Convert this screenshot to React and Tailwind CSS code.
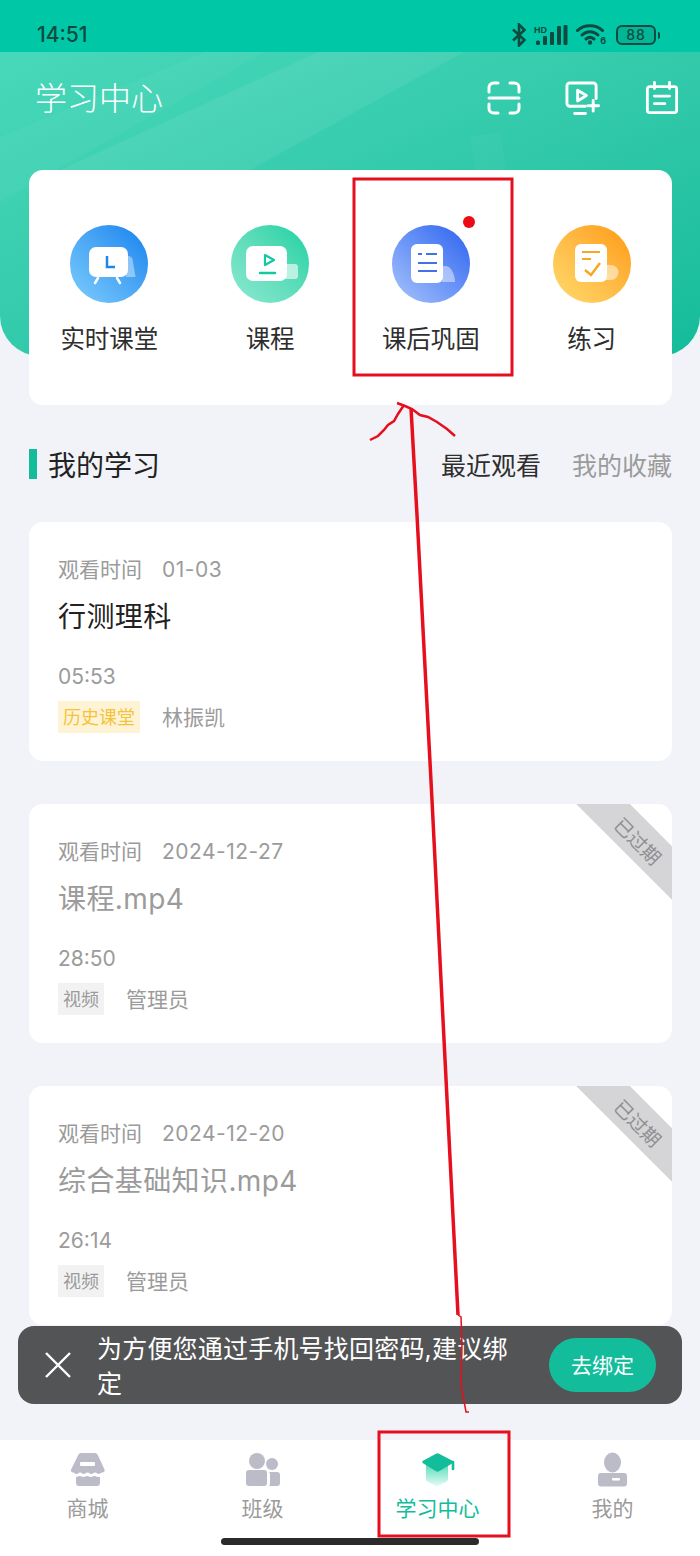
import React from 'react';

const cjk = { fontFamily: 'Inter, "Noto Sans CJK SC", "Noto Sans", sans-serif' };

const StatusIcons = () => (
  <div className="flex items-center text-[#0f4a40]">
    <svg width="16" height="24" viewBox="0 0 16 24" fill="none" stroke="currentColor" strokeWidth="2.6">
      <path d="M2 6.500 13.500 17 8 22.500V1.500L13.500 7 2 17.500" />
    </svg>
    <svg className="ml-[7px]" width="34" height="20" viewBox="0 0 34 20" fill="currentColor">
      <text x="0" y="7.500" fontSize="9" fontWeight="700" fontFamily="Liberation Sans">HD</text>
      <rect x="2" y="15.500" width="4" height="4.500" rx="1.500" />
      <rect x="9" y="11" width="4" height="9" rx="1" />
      <rect x="16" y="7" width="4" height="13" rx="1" />
      <rect x="23" y="1" width="4" height="19" rx="1" />
      <rect x="29.500" y="0" width="4" height="20" rx="1" />
    </svg>
    <div className="relative ml-[8px] h-[24px] w-[30px]">
      <svg width="30" height="24" viewBox="0 0 30 24" fill="none" stroke="currentColor" strokeWidth="3" strokeLinecap="round">
        <path d="M1.500 7.500C8 1 20 1 26.500 7.500" />
        <path d="M6 12c4.500-4.500 11.500-4.500 16 0" />
        <path d="M10 16c2.500-2 5.500-2 8 0" />
        <circle cx="14" cy="19.500" r="2.200" fill="currentColor" stroke="none" />
      </svg>
      <span className="absolute right-[0px] bottom-[1px] text-[9px] leading-[10px] font-bold">6</span>
    </div>
    <div className="ml-[10px] flex items-center">
      <div className="flex h-[20px] w-[40px] items-center justify-center rounded-[6px] border-2 border-[#0f4a40] bg-[#0f4a40]/15">
        <span className="text-[14px] leading-none font-medium tracking-[1px]">88</span>
      </div>
      <div className="ml-[2px] h-[7px] w-[2px] rounded-r-sm bg-[#0f4a40]" />
    </div>
  </div>
);

const HeaderIcons = () => (
  <div className="flex items-center">
    <svg width="34" height="34" viewBox="0 0 34 34" fill="none" stroke="white" strokeWidth="3" strokeLinecap="round">
      <path d="M2 11V6.500A4.500 4.500 0 0 1 6.500 2H11" />
      <path d="M23 2h4.500A4.500 4.500 0 0 1 32 6.500V11" />
      <path d="M2 17h30" />
      <path d="M2 23v4.500A4.500 4.500 0 0 0 6.500 32H11" />
      <path d="M23 32h4.500a4.500 4.500 0 0 0 4.500-4.500V23" />
    </svg>
    <svg className="ml-[44px]" width="35" height="35" viewBox="0 0 36 36" fill="none" stroke="white" strokeWidth="3" strokeLinecap="round" strokeLinejoin="round">
      <path d="M21 26H5a3 3 0 0 1-3-3V5a3 3 0 0 1 3-3h24a3 3 0 0 1 3 3v13" />
      <path d="M13 9.500 22 15l-9 5.500z" />
      <path d="M10 33.500h11" />
      <path d="M29 20v11M23.500 25.500h11" />
    </svg>
    <svg className="ml-[45px]" width="34" height="34" viewBox="0 0 36 36" fill="none" stroke="white" strokeWidth="3" strokeLinecap="round" strokeLinejoin="round">
      <path d="M5 6h26a2.500 2.500 0 0 1 2.500 2.500V31a2.500 2.500 0 0 1-2.500 2.500H5A2.500 2.500 0 0 1 2.500 31V8.500A2.500 2.500 0 0 1 5 6z" />
      <path d="M10 1.500V8M26 1.500V8" />
      <path d="M10 16h16M10 24h11" />
    </svg>
  </div>
);

const LiveIcon = () => (
  <svg width="78" height="78" viewBox="0 0 78 78" fill="none">
    <path d="M56 31h3a4 4 0 0 1 3.500 3l3 18H56z" fill="white" fillOpacity=".4" />
    <rect x="19" y="22" width="39" height="30" rx="7" fill="white" />
    <path d="M28 53l-3 5M47 53l3 5" stroke="white" strokeWidth="2.500" strokeLinecap="round" />
    <path d="M37 31v11h8" stroke="#1989ec" strokeWidth="2.500" />
  </svg>
);

const CourseIcon = () => (
  <svg width="78" height="78" viewBox="0 0 78 78" fill="none">
    <rect x="52" y="39" width="15" height="15" rx="3" fill="white" fillOpacity=".6" />
    <rect x="15" y="21" width="41" height="35" rx="7" fill="white" />
    <path d="M34 30l9 5-9 5z" stroke="#12c9a1" strokeWidth="2.200" strokeLinejoin="round" />
    <path d="M29 48h15" stroke="#12c9a1" strokeWidth="2.500" strokeLinecap="round" />
  </svg>
);

const ReviewIcon = () => (
  <svg width="78" height="78" viewBox="0 0 78 78" fill="none">
    <path d="M50 41h4c5 0 9 9 9 16H50z" fill="white" fillOpacity=".45" />
    <rect x="19" y="19" width="32" height="39" rx="6" fill="white" />
    <path d="M26 29h4M34 29h11M26 38h19M26 46h19" stroke="#4470e8" strokeWidth="2.200" />
  </svg>
);

const PracticeIcon = () => (
  <svg width="78" height="78" viewBox="0 0 78 78" fill="none">
    <path d="M52 40h6a7.500 7.500 0 0 1 0 15h-6z" fill="white" fillOpacity=".5" />
    <rect x="22" y="19" width="32" height="38" rx="6" fill="white" />
    <path d="M29 27h18M29 34h9" stroke="#f7a823" strokeWidth="2.200" />
    <path d="M32 45l6 5 9-12" stroke="#f7a823" strokeWidth="2.500" />
  </svg>
);

const entries = [
  { label: '实时课堂', circle: 'bg-linear-to-tr from-[#7dcdfb] to-[#0b82ee]', Icon: LiveIcon },
  { label: '课程', circle: 'bg-linear-to-tr from-[#8ae9d1] to-[#03d1a3]', Icon: CourseIcon },
  { label: '课后巩固', circle: 'bg-linear-to-tr from-[#a9c2fb] to-[#2c5fee]', Icon: ReviewIcon, dot: true },
  { label: '练习', circle: 'bg-linear-to-tr from-[#ffdb6b] to-[#ff9a00]', Icon: PracticeIcon },
];

const records = [
  { date: '01-03', title: '行测理科', time: '05:53', tag: '历史课堂', teacher: '林振凯', live: true },
  { date: '2024-12-27', title: '课程.mp4', time: '28:50', tag: '视频', teacher: '管理员' },
  { date: '2024-12-20', title: '综合基础知识.mp4', time: '26:14', tag: '视频', teacher: '管理员' },
];

const RecordCard = ({ date, title, time, tag, teacher, live }) => (
  <div className="relative h-[239px] overflow-hidden rounded-[14px] bg-white px-[29px] pt-[33px]">
    {!live && (
      <div className="absolute top-[17px] right-[-37px] flex h-[38px] w-[140px] rotate-45 items-center justify-center bg-[#d5d5d7] pt-[6px] text-[19px] text-[#8f8f91]">
        已过期
      </div>
    )}
    <div className="flex h-[30px] items-center text-[21px] leading-[30px] text-[#9b9b9b]">
      <span>观看时间</span>
      <span className="ml-[20px] tracking-[0.5px]">{date}</span>
    </div>
    <div className={`mt-[12px] text-[28px] leading-[40px] tracking-[0.4px] ${live ? 'text-[#222222]' : 'text-[#9b9b9b]'}`}>{title}</div>
    <div className="mt-[25px] text-[21px] leading-[30px] text-[#9b9b9b]">{time}</div>
    <div className="mt-[8px] flex items-center">
      <span className={`flex h-[32px] items-center px-[5px] pt-[2px] text-[18px] ${live ? 'bg-[#fff3d6] text-[#f5c33b]' : 'bg-[#f2f2f2] text-[#9b9b9b]'}`}>
        {tag}
      </span>
      <span className="ml-[22px] pt-[2px] text-[21px] text-[#9b9b9b]">{teacher}</span>
    </div>
  </div>
);

const StoreIcon = () => (
  <svg width="40" height="36" viewBox="0 0 40 36" fill="#bcbcc9">
    <path d="M13 1h14a3 3 0 0 1 3 2.500l6.500 14c.500 2-.500 3-2 3-2 0-2 1.500-3.700 1.500s-2-1.500-3.700-1.500-2 1.500-3.700 1.500-2-1.500-3.900-1.500-2 1.500-3.700 1.500-2-1.500-3.700-1.500-2 1.500-3.700 1.500-1.700-1.500-3.300-1.500c-1.500 0-2.500-1-2-3L10 3.500A3 3 0 0 1 13 1z" />
    <path d="M8 25c2 0 2-1 3.700-1s2 1 3.700 1 2-1 3.700-1 2 1 3.700 1 2-1 3.700-1 2 1 3.700 1H32v6a3 3 0 0 1-3 3H11a3 3 0 0 1-3-3z" />
    <rect x="12" y="10" width="15" height="4" rx="1" fill="white" />
  </svg>
);

const ClassIcon = () => (
  <svg width="40" height="36" viewBox="0 0 40 36" fill="#bcbcc9">
    <circle cx="14" cy="9" r="8" />
    <rect x="3" y="18" width="21" height="16" rx="3" />
    <circle cx="29" cy="12" r="6" />
    <path d="M26 20h8a3 3 0 0 1 3 3v8a3 3 0 0 1-3 3h-8c1-1 1-2 1-3v-8c0-1 0-2-1-3z" />
  </svg>
);

const CapIcon = () => (
  <svg width="40" height="36" viewBox="0 0 40 36" fill="none">
    <defs>
      <linearGradient id="capBody" x1="0" y1="0" x2="0" y2="1">
        <stop offset="0" stopColor="#58dcb9" />
        <stop offset="1" stopColor="#e4fbf4" />
      </linearGradient>
    </defs>
    <path d="M8 12h22v15a3 3 0 0 1-1.500 2.500l-8 4.200a3 3 0 0 1-3 0l-8-4.200A3 3 0 0 1 8 27z" fill="url(#capBody)" />
    <path d="M18 1.700a3 3 0 0 1 3 0l13.500 7c1 .600 1 2 0 2.500L21 19.200a3 3 0 0 1-3 0L5 11.200c-1-.500-1-1.900 0-2.500z" fill="#13bd9c" />
    <path d="M35 10v7" stroke="#13bd9c" strokeWidth="2.600" strokeLinecap="round" />
  </svg>
);

const MineIcon = () => (
  <svg width="40" height="36" viewBox="0 0 40 36" fill="#bcbcc9">
    <ellipse cx="19.500" cy="10.500" rx="8.500" ry="10" />
    <rect x="5" y="21" width="29" height="13.500" rx="3" />
    <rect x="19" y="26" width="8" height="2.500" rx="1" fill="white" />
  </svg>
);

const tabs = [
  { label: '商城', Icon: StoreIcon },
  { label: '班级', Icon: ClassIcon },
  { label: '学习中心', Icon: CapIcon, active: true },
  { label: '我的', Icon: MineIcon },
];

const App = () => (
  <div className="relative flex h-[1556px] w-[700px] flex-col overflow-hidden bg-[#f2f3f8]" style={cjk}>
    {/* Status bar */}
    <div className="flex h-[52px] items-center justify-between bg-[#00c8a6] pt-[18px] pr-[40px] pl-[37px]">
      <span className="text-[21px] font-medium text-[#0f4a40]">14:51</span>
      <StatusIcons />
    </div>

    {/* Green header */}
    <div className="relative h-[304px] overflow-hidden rounded-b-[40px] bg-linear-to-br from-[#48d8ba] to-[#12bc9b] pt-[26px] pr-[21px] pl-[35px]">
      <svg className="absolute top-0 left-0" width="700" height="304" viewBox="0 0 700 304">
        <path d="M318 0h146L250 118H60z" fill="white" fillOpacity=".07" />
        <path d="M0 85 205 0h60L0 150z" fill="white" fillOpacity=".04" />
        <path d="M470 85l30-5 10 60-30 10z" fill="white" fillOpacity=".03" />
      </svg>
      <div className="relative flex h-[40px] items-center justify-between">
        <span className="mt-[2px] text-[32px] leading-[40px] font-light text-white">学习中心</span>
        <HeaderIcons />
      </div>
    </div>

    {/* Entry card */}
    <div className="relative mt-[-186px] mr-[28px] ml-[29px] grid h-[235px] grid-cols-4 rounded-[14px] bg-white pt-[55px]">
      {entries.map(({ label, circle, Icon, dot }) => (
        <div key={label} className="relative flex flex-col items-center">
          <div className={`h-[78px] w-[78px] rounded-full ${circle}`}>
            <Icon />
          </div>
          {dot && <div className="absolute top-[-9px] left-[112px] h-[12px] w-[12px] rounded-full bg-[#ee0a12]" />}
          <span className="mt-[18px] text-[24.5px] leading-[36px] text-[#2e2e2e]">{label}</span>
        </div>
      ))}
    </div>

    {/* My study */}
    <div className="mt-[43px] mr-[28px] ml-[29px] flex h-[32px] items-center justify-between">
      <div className="flex items-center">
        <div className="h-[30px] w-[8px] bg-[#13bd9c]" />
        <span className="mt-[4px] ml-[11px] text-[28px] leading-[30px] text-[#222222]">我的学习</span>
      </div>
      <div className="mt-[4px] flex items-center gap-[31px] text-[25px] leading-[30px]">
        <span className="text-[#2e2e2e]">最近观看</span>
        <span className="text-[#9b9b9b]">我的收藏</span>
      </div>
    </div>

    <div className="mt-[42px] mr-[28px] ml-[29px] flex flex-col gap-[43px]">
      {records.map((r) => (
        <RecordCard key={r.date} {...r} />
      ))}
    </div>

    {/* Bottom tabs */}
    <div className="mt-auto grid h-[116px] grid-cols-4 bg-white pt-[12px]">
      {tabs.map(({ label, Icon, active }) => (
        <div key={label} className="flex flex-col items-center">
          <Icon />
          <span className={`mt-[7px] text-[21px] leading-[28px] ${active ? 'text-[#13bd9c]' : 'text-[#9b9b9b]'}`}>{label}</span>
        </div>
      ))}
    </div>
    <div className="absolute bottom-[11px] left-[221px] h-[7px] w-[258px] rounded-full bg-[#2b2b2b]" />

    {/* Toast */}
    <div className="absolute right-[18px] bottom-[152px] left-[18px] flex h-[78px] items-center rounded-[16px] bg-[#535456] pr-[26px] pl-[27px]">
      <svg width="26" height="26" viewBox="0 0 26 26" fill="none" stroke="white" strokeWidth="2.400">
        <path d="M1 1l24 24M25 1 1 25" />
      </svg>
      <p className="ml-[26px] w-[424px] pt-[4px] text-[25px] leading-[35px] tracking-[0.2px] text-white">为方便您通过手机号找回密码,建议绑定</p>
      <div className="ml-auto flex h-[54px] w-[107px] items-center justify-center rounded-full bg-[#13bd9c] pt-[2px] text-[21px] text-white">去绑定</div>
    </div>

    {/* Hand-drawn annotations */}
    <svg className="pointer-events-none absolute top-0 left-0" width="700" height="1556" viewBox="0 0 700 1556" fill="none" stroke="#e60f1e">
      <rect x="354" y="179" width="158" height="196" strokeWidth="3" />
      <rect x="379" y="1432" width="130" height="104" strokeWidth="3" />
      <path d="M370 440l8-4 6-6 4-5 6-4 4-7 6-9" strokeWidth="2.500" />
      <path d="M397 403l8 3 7 3 8 6 8 2 9 5 10 7 8 7" strokeWidth="2.500" />
      <path d="M411 408 417 515 432 800 442 1000 458 1315" strokeWidth="3.500" />
      <path d="M458 1315l3 2 1 28-1 40 5 27h3" strokeWidth="1.500" />
    </svg>
  </div>
);

export default App;
